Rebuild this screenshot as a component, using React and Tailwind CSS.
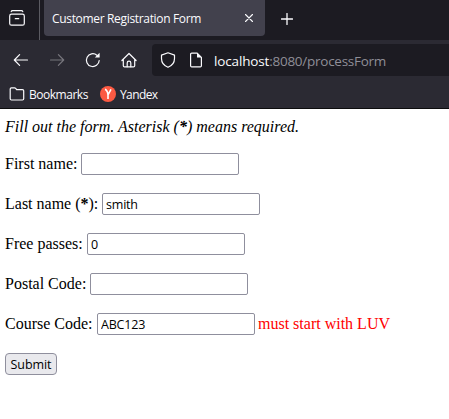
const UI = "font-['Open_Sans','Noto_Sans',sans-serif]";

function Icon({ children, className = '' }) {
  return (
    <svg viewBox="0 0 16 16" fill="none" stroke="currentColor" strokeWidth="1.2" strokeLinecap="round" strokeLinejoin="round" className={`block size-4 shrink-0 ${className}`}>
      {children}
    </svg>
  );
}

function TabStrip() {
  return (
    <div className="flex h-10 bg-[#1c1b22]">
      <div className="flex w-10 shrink-0 border-r border-[#5b5b62] pl-[9px] pt-[10px]">
        <Icon>
          <path d="M2.2 1.6Q2.5.7 3.5.7h9q1 0 1.3.9" />
          <rect x=".7" y="4.2" width="14.6" height="11" rx="1.8" />
          <path d="M6.3 8.7h3.4" />
        </Icon>
      </div>
      <div className="ml-1 flex h-9 w-[221px] shrink-0 items-center rounded-b bg-[#42414d] pl-2 text-[#fbfbfe]">
        <span className="w-[193px] whitespace-nowrap pt-0.5 text-[12px] tracking-[-0.33px]">Customer Registration Form</span>
        <svg viewBox="0 0 8 8" className="size-2 shrink-0" stroke="currentColor" strokeWidth="1.1" strokeLinecap="round"><path d="M.5.5l7 7M7.5.5l-7 7" /></svg>
      </div>
      <svg viewBox="0 0 12 12" className="ml-4 mt-[13px] size-3 shrink-0" stroke="currentColor" strokeWidth="1.3" strokeLinecap="round"><path d="M6 .5v11M.5 6h11" /></svg>
    </div>
  );
}

function NavBar() {
  return (
    <div className="flex h-9 items-end">
      <div className="flex h-8 w-[152px] shrink-0 items-center gap-5 pl-[13px]">
        <Icon><path d="M14.5 8H1.3M6.6 2.7L1.3 8l5.3 5.3" /></Icon>
        <Icon className="text-[#77767d]"><path d="M1.5 8h13.2M9.4 2.7L14.7 8l-5.3 5.3" /></Icon>
        <Icon>
          <path d="M14.2 8.5A6.4 6.4 0 1 1 11.9 3.2L13.2 4.4" />
          <path d="M14.6.8v4.8H9.8z" fill="currentColor" stroke="none" />
        </Icon>
        <Icon>
          <path d="M.9 8.5L8 1.5l7.1 7M2.3 7.5v6.2q0 1.2 1.2 1.2h9q1.2 0 1.2-1.2V7.5" />
          <path d="M6.2 14.7v-3.8a1.8 1.8 0 0 1 3.6 0v3.8" />
        </Icon>
      </div>
      <div className="flex h-8 flex-1 items-center rounded-l bg-[#1c1b22] pl-2">
        <Icon><path d="M8 .8L14.5 3.1V6.5C14.5 10.5 12 13.7 8 15.3 4 13.7 1.5 10.5 1.5 6.5V3.1z" /></Icon>
        <Icon className="ml-3">
          <path d="M3.7 1.1h5.5l4.2 4.2v8.4q0 1.1-1.1 1.1H3.7q-1.1 0-1.1-1.1V2.2q0-1.1 1.1-1.1z" />
          <path d="M9 1v4.5h4.5z" fill="currentColor" stroke="none" />
        </Icon>
        <span className="ml-[10px] whitespace-nowrap pt-0.5 text-[13.5px] tracking-[-0.15px]">localhost<span className="tracking-[-0.26px] text-[#8f8e97]">:8080/processForm</span></span>
      </div>
    </div>
  );
}

function BookmarksBar() {
  return (
    <div className="flex h-8 items-center pl-[9px] pt-1 text-[12px]">
      <Icon><path d="M1.2 12.8V3q0-1.2 1.2-1.2h3.1q.7 0 1.2.6l.9 1.2h5.8q1.3 0 1.3 1.2v8q0 1.2-1.2 1.2H2.4q-1.2 0-1.2-1.2z" /></Icon>
      <span className="ml-1 w-[71px] whitespace-nowrap pt-0.5 tracking-[-0.48px]">Bookmarks</span>
      <svg viewBox="0 0 16 16" className="size-4 shrink-0">
        <circle cx="8" cy="8" r="8" fill="#fc5a43" />
        <path d="M5 3.4Q7.4 4 8 8.8M11 3.4L8 8.8M8 8.2v4.8" fill="none" stroke="white" strokeWidth="1.6" />
      </svg>
      <span className="ml-1 pt-0.5 tracking-[-0.6px]">Yandex</span>
    </div>
  );
}

const fields = [
  { label: 'First name:', value: '', width: 'w-[76px]' },
  { label: <>Last name (<b>*</b>):</>, value: 'smith', width: 'w-[97px]' },
  { label: 'Free passes:', value: '0', width: 'w-[82px]' },
  { label: 'Postal Code:', value: '', width: 'w-[85px]' },
  { label: 'Course Code:', value: 'ABC123', width: 'w-[92px]', error: 'must start with LUV' },
];

function Field({ label, value, width, error }) {
  return (
    <label className="flex h-[22px] items-center">
      <span className={`${width} shrink-0 whitespace-nowrap`}>{label}</span>
      <input defaultValue={value} className={`h-[22px] w-[158px] rounded-[2px] border border-[#8f8f9d] bg-white px-[3px] text-[12.5px] tracking-[-0.2px] outline-none ${UI}`} />
      {error && <span className="ml-[3px] whitespace-nowrap text-[#ff0000]">{error}</span>}
    </label>
  );
}

export default function App() {
  return (
    <div className="h-[419px] w-[449px] overflow-hidden bg-white">
      <header className={`h-[109px] border-b border-[#0c0c0d] bg-[#2b2a33] text-[#fbfbfe] ${UI}`}>
        <TabStrip />
        <NavBar />
        <BookmarksBar />
      </header>
      <main className="px-[5px] pt-[9px] font-['Liberation_Serif',serif] text-[16px] leading-[18px] text-black">
        <p className="whitespace-nowrap italic">Fill out the form. Asterisk (<b>*</b>) means required.</p>
        <form className="mt-[17px] flex flex-col items-start gap-[18px]">
          {fields.map((field) => <Field key={field.value + field.width} {...field} />)}
          <button type="button" className={`h-[22px] w-[52px] rounded-[4px] border border-[#8f8f9d] bg-[#e9e9ed] pt-px text-center text-[12.5px] leading-5 tracking-[-0.1px] ${UI}`}>Submit</button>
        </form>
      </main>
    </div>
  );
}
